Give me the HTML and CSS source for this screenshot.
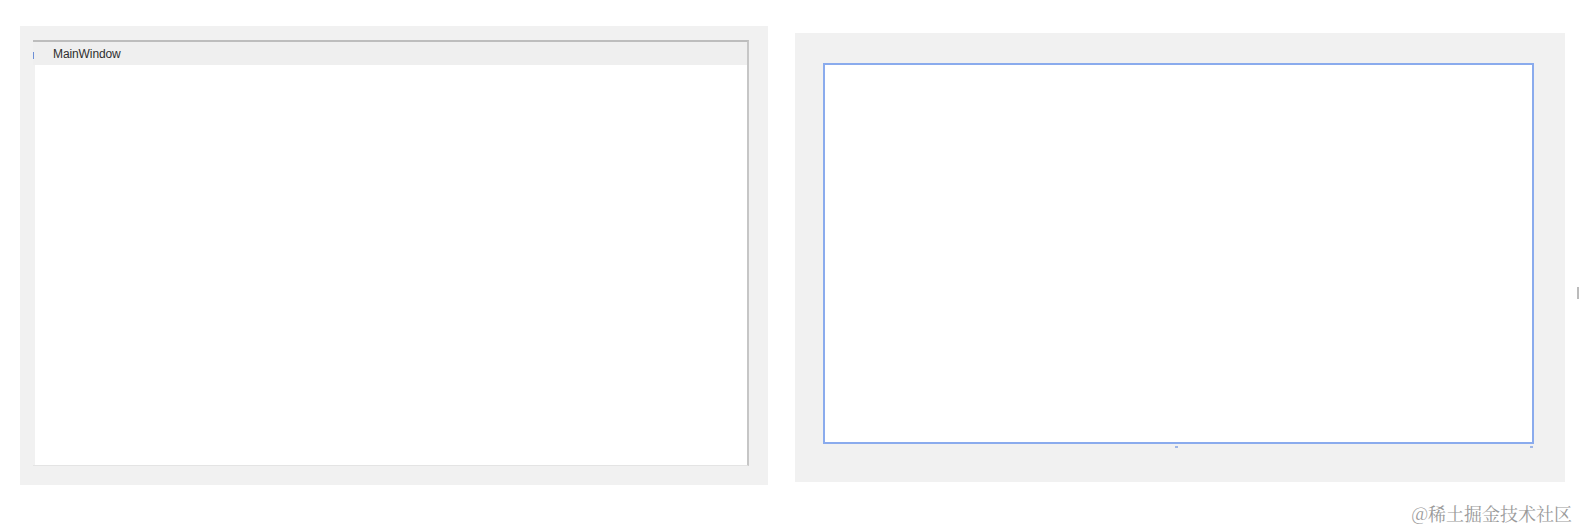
FILE: index.html
```html
<!DOCTYPE html>
<html lang="en">
<head>
    <meta charset="UTF-8">
    <title>MainWindow</title>
    <link rel="stylesheet" href="styles.css">
</head>
<body>

    <!-- Left: running window -->
    <div class="panel panel-left">
        <div class="window">
            <div class="titlebar">
                <span class="tick"></span>
                <span class="title">MainWindow</span>
            </div>
            <div class="client"></div>
        </div>
    </div>

    <!-- Right: designer canvas -->
    <div class="panel panel-right">
        <div class="canvas"></div>
        <span class="handle handle-bottom"></span>
        <span class="handle handle-corner"></span>
    </div>

    <span class="side-tick"></span>

    <div class="watermark">@稀土掘金技术社区</div>

</body>
</html>
```

FILE: styles.css
```css
body, html {
    margin: 0;
    padding: 0;
    width: 100%;
    height: 100%;
    background: #fff;
    font-family: "Liberation Sans", Arial, sans-serif;
    overflow: hidden;
}

body {
    display: flex;
    align-items: flex-start;
    position: relative;
}

.panel {
    background: #f1f1f1;
    box-sizing: border-box;
    display: flex;
    position: relative;
}

.panel-left {
    margin: 26px 0 0 20px;
    width: 748px;
    height: 459px;
    padding: 14px 19px 19px 13px;
}

.window {
    flex: 1;
    display: flex;
    flex-direction: column;
    border-top: 2px solid #bdbdbd;
    border-right: 2px solid #c6c6c6;
    border-bottom: 1px solid #e4e4e4;
    background: #fff;
}

.titlebar {
    height: 23px;
    background: #efefef;
    display: flex;
    align-items: center;
    position: relative;
}

.tick {
    width: 1px;
    height: 7px;
    background: #6d8fd6;
    margin: 4px 0 0 0;
}

.title {
    margin-left: 19px;
    font-size: 12px;
    color: #2e2e2e;
    letter-spacing: -0.1px;
}

.client {
    flex: 1;
    border-left: 2px solid #f1f1f1;
}

.panel-right {
    margin: 33px 0 0 27px;
    width: 770px;
    height: 449px;
    padding: 30px 31px 38px 28px;
}

.canvas {
    flex: 1;
    border: 2px solid #8aabed;
    background: #fff;
}

.handle {
    position: absolute;
    width: 3px;
    height: 2px;
    background: #9fb6e6;
}

.handle-bottom {
    left: 380px;
    top: 413px;
}

.handle-corner {
    left: 735px;
    top: 413px;
}

.side-tick {
    position: absolute;
    left: 1577px;
    top: 287px;
    width: 2px;
    height: 12px;
    background: #bbb;
}

.watermark {
    position: absolute;
    right: 8px;
    bottom: 5px;
    font-family: "Noto Serif CJK SC", "Noto Sans CJK SC", serif;
    font-size: 18px;
    color: #9a9a9a;
}
```
